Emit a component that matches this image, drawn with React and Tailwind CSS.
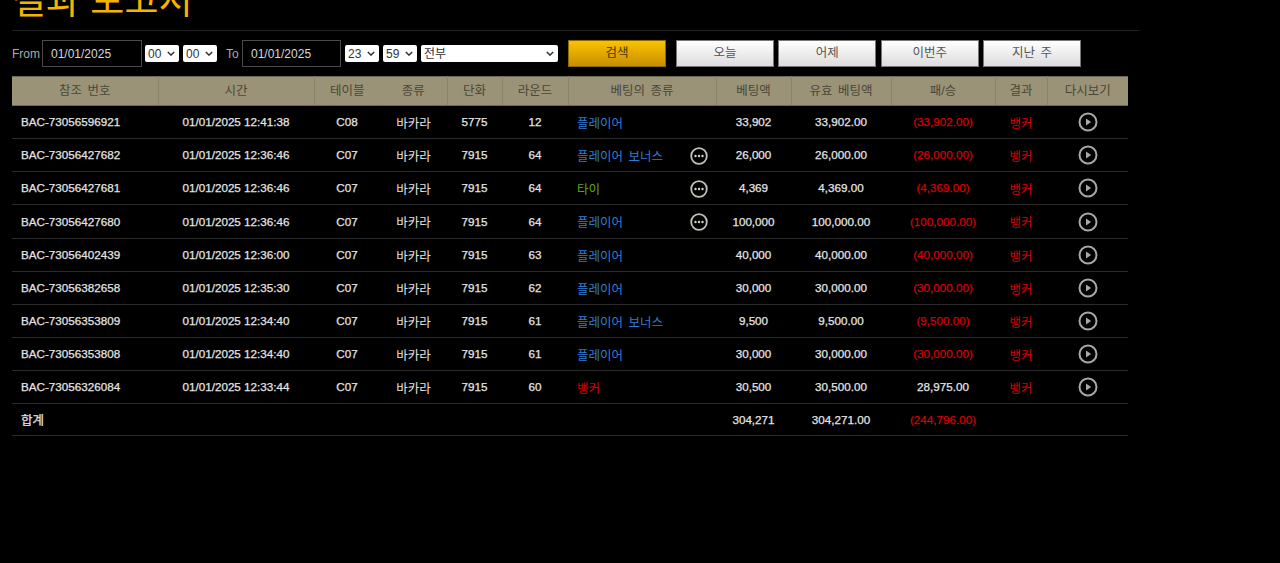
const rows = [
  ["BAC-73056596921","01/01/2025 12:41:38","C08","5775","12","플레이어","blue",false,"33,902","33,902.00","(33,902.00)"],
  ["BAC-73056427682","01/01/2025 12:36:46","C07","7915","64","플레이어 보너스","blue",true,"26,000","26,000.00","(26,000.00)"],
  ["BAC-73056427681","01/01/2025 12:36:46","C07","7915","64","타이","green",true,"4,369","4,369.00","(4,369.00)"],
  ["BAC-73056427680","01/01/2025 12:36:46","C07","7915","64","플레이어","blue",true,"100,000","100,000.00","(100,000.00)"],
  ["BAC-73056402439","01/01/2025 12:36:00","C07","7915","63","플레이어","blue",false,"40,000","40,000.00","(40,000.00)"],
  ["BAC-73056382658","01/01/2025 12:35:30","C07","7915","62","플레이어","blue",false,"30,000","30,000.00","(30,000.00)"],
  ["BAC-73056353809","01/01/2025 12:34:40","C07","7915","61","플레이어 보너스","blue",false,"9,500","9,500.00","(9,500.00)"],
  ["BAC-73056353808","01/01/2025 12:34:40","C07","7915","61","플레이어","blue",false,"30,000","30,000.00","(30,000.00)"],
  ["BAC-73056326084","01/01/2025 12:33:44","C07","7915","60","뱅커","red",false,"30,500","30,500.00","28,975.00"],
];

const FONT = "font-['Liberation_Sans','Noto_Sans_CJK_KR',sans-serif]";

function Dots() {
  return (
    <svg width="18" height="18" viewBox="0 0 18 18" className="block">
      <circle cx="9" cy="9" r="7.8" fill="none" stroke="#c4c0b8" strokeWidth="1.8" />
      <circle cx="5.5" cy="9" r="1.2" fill="#d8d4cc" />
      <circle cx="9" cy="9" r="1.2" fill="#d8d4cc" />
      <circle cx="12.5" cy="9" r="1.2" fill="#d8d4cc" />
    </svg>
  );
}

function Play() {
  return (
    <svg width="20" height="20" viewBox="0 0 20 20" className="block">
      <circle cx="10" cy="10" r="8.5" fill="none" stroke="#a8a8a8" strokeWidth="2" />
      <path d="M8 6.4 L13.2 10 L8 13.6 Z" fill="#a8a8a8" />
    </svg>
  );
}

function Select({ value, className }) {
  return (
    <div className={`flex h-[17px] items-center justify-between rounded-[2px] bg-white pl-[3px] pr-[4px] text-[12px] text-[#333] ${className}`}>
      <span className="leading-none">{value}</span>
      <svg width="8" height="5" viewBox="0 0 10 6"><path d="M1 1 L5 5 L9 1" fill="none" stroke="#333" strokeWidth="1.8" /></svg>
    </div>
  );
}

function DateBox({ className = "" }) {
  return (
    <div className={`flex h-[27px] items-center border border-[#4a4a4a] bg-black pl-[8px] text-[12px] text-[#d8d8d8] ${className}`}>01/01/2025</div>
  );
}

function QuickButton({ children }) {
  return (
    <div className="flex h-[27px] w-[98px] items-center justify-center border border-[#777] bg-gradient-to-b from-white to-[#dcdcdc] text-[12.5px] text-[#555] [word-spacing:2px]">{children}</div>
  );
}

function Th({ children, divider = true }) {
  return (
    <th className={`h-[29px] border-y border-y-[#6e6a58] p-0 pt-[1px] text-center text-[12.5px] font-normal text-[#4a4636] [word-spacing:2px] ${divider ? "border-r border-r-[#8a846c]" : ""}`}>{children}</th>
  );
}

function Td({ children, className = "" }) {
  return <td className={`border-b border-b-[#2a2a2a] p-0 text-center text-[11.67px] font-normal text-[#e4e4e4] [-webkit-text-stroke:0.25px] ${className}`}>{children}</td>;
}

const KO = "!pt-[4px] !text-[12.5px] [-webkit-text-stroke:0px]";
const typeColor = { blue: "text-[#2f7fd6]", green: "text-[#5fa81e]", red: "text-[#d80000]" };

export default function App() {
  return (
    <div className={`h-[563px] w-[1280px] overflow-hidden bg-black ${FONT}`}>
      <div className="w-[1139px]">
        <div className="ml-[12px] h-[31px] overflow-hidden border-b border-b-[#222]">
          <h1 className="-mt-[21px] text-[37px] leading-[46px] font-normal text-[#f5b400]">결과 보고서</h1>
        </div>
        <div className="ml-[12px] mt-[9px] flex h-[27px] items-center text-[12px] text-[#aaaaaa]">
          <span className="w-[30px]">From</span>
          <DateBox className="w-[100px]" />
          <Select value="00" className="ml-[3px] w-[34px]" />
          <Select value="00" className="ml-[4px] w-[34px]" />
          <span className="ml-[9px] w-[16px]">To</span>
          <DateBox className="w-[99px]" />
          <Select value="23" className="ml-[4px] w-[34px]" />
          <Select value="59" className="ml-[4px] w-[34px]" />
          <Select value="전부" className="ml-[4px] w-[137px]" />
          <div className="ml-[10px] flex h-[27px] w-[98px] items-center justify-center border border-[#8a6a00] bg-gradient-to-b from-[#fcc200] to-[#c98f00] text-[12.5px] text-[#4a3500]">검색</div>
          <div className="ml-[10px] flex gap-[4.33px]">
            <QuickButton>오늘</QuickButton>
            <QuickButton>어제</QuickButton>
            <QuickButton>이번주</QuickButton>
            <QuickButton>지난 주</QuickButton>
          </div>
        </div>
        <table className="ml-[12px] mt-[9px] w-[1116px] table-fixed border-collapse">
          <colgroup>
            <col className="w-[146px]" /><col className="w-[156px]" /><col className="w-[66px]" /><col className="w-[67px]" />
            <col className="w-[55px]" /><col className="w-[66px]" /><col className="w-[148px]" /><col className="w-[75px]" />
            <col className="w-[100px]" /><col className="w-[104px]" /><col className="w-[52px]" /><col className="w-[81px]" />
          </colgroup>
          <thead className="bg-[#9a9378]">
            <tr>
              <Th>참조 번호</Th><Th>시간</Th><Th divider={false}>테이블</Th><Th>종류</Th><Th>단화</Th><Th>라운드</Th>
              <Th>베팅의 종류</Th><Th>베팅액</Th><Th>유효 베팅액</Th><Th>패/승</Th><Th>결과</Th>
              <Th divider={false}>다시보기</Th>
            </tr>
          </thead>
          <tbody>
            {rows.map((r, i) => (
              <tr key={r[0]} className={i === 3 ? "h-[34px]" : "h-[33px]"}>
                <Td className="pl-[9px] !text-left">{r[0]}</Td>
                <Td>{r[1]}</Td>
                <Td>{r[2]}</Td>
                <Td className={KO}>바카라</Td>
                <Td>{r[3]}</Td>
                <Td>{r[4]}</Td>
                <Td className={`pl-[9px] pr-[8px] !text-left [word-spacing:2px] ${KO}`}>
                  <div className="flex items-center justify-between">
                    <span className={typeColor[r[6]]}>{r[5]}</span>
                    {r[7] && <div className="-mt-[3px]"><Dots /></div>}
                  </div>
                </Td>
                <Td>{r[8]}</Td>
                <Td>{r[9]}</Td>
                <Td className={r[10].startsWith("(") ? "!text-[#d80000]" : ""}>{r[10]}</Td>
                <Td className={`!text-[#d80000] ${KO}`}>뱅커</Td>
                <Td><div className="flex justify-center"><Play /></div></Td>
              </tr>
            ))}
            <tr className="h-[32px]">
              <Td className="pl-[9px] pt-[3px] !text-left !text-[12.5px]">합계</Td>
              <Td /><Td /><Td /><Td /><Td /><Td />
              <Td>304,271</Td>
              <Td>304,271.00</Td>
              <Td className="!text-[#d80000]">(244,796.00)</Td>
              <Td /><Td />
            </tr>
          </tbody>
        </table>
      </div>
    </div>
  );
}
